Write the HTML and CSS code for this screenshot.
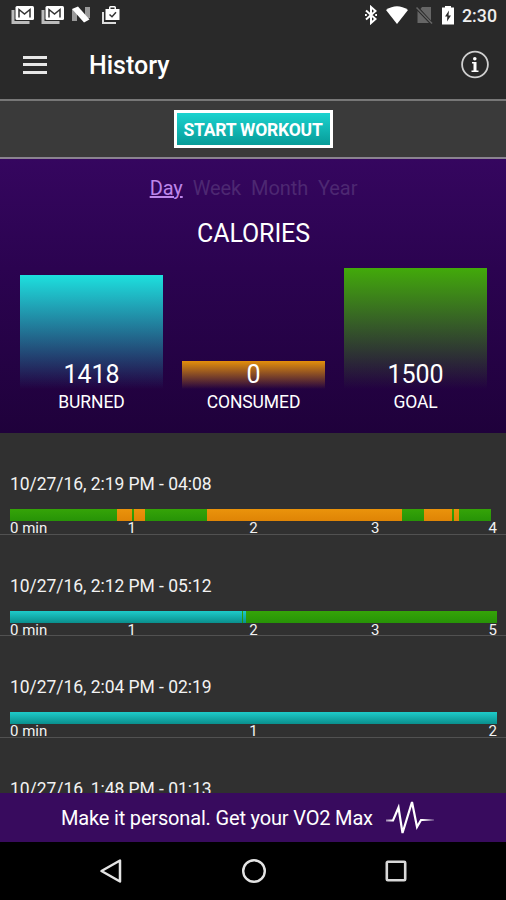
FILE: index.html
```html
<!DOCTYPE html>
<html lang="en">
<head>
    <meta charset="UTF-8">
    <meta name="viewport" content="width=device-width, initial-scale=1.0">
    <title>History</title>
    <link rel="stylesheet" href="styles.css">
</head>
<body>
    <div class="status-bar">
        <div class="status-left">
            <svg class="mail-icon" width="24" height="20" viewBox="0 0 24 20">
                <path d="M2 5v12.500h16.500" fill="none" stroke="#bbb" stroke-width="3"/>
                <rect x="4.500" y="1" width="18.500" height="14" rx="1.500" fill="#fff"/>
                <path d="M8 12.500V4.500l5.500 4.500L19 4.500v8" fill="none" stroke="#333" stroke-width="1.500"/>
            </svg>
            <svg class="mail-icon" width="24" height="20" viewBox="0 0 24 20">
                <path d="M2 5v12.500h16.500" fill="none" stroke="#bbb" stroke-width="3"/>
                <rect x="4.500" y="1" width="18.500" height="14" rx="1.500" fill="#fff"/>
                <path d="M8 12.500V4.500l5.500 4.500L19 4.500v8" fill="none" stroke="#333" stroke-width="1.500"/>
            </svg>
            <svg class="n-icon" width="20" height="18" viewBox="0 0 20 18">
                <path d="M1 3v12h5V5zM14 1v12l5-1V1z" fill="#999"/>
                <path d="M1 3l6-2.500 11.500 13L13 16.500z" fill="#fff"/>
            </svg>
            <svg width="20" height="20" viewBox="0 0 20 20">
                <path d="M2 7v11h13" fill="none" stroke="#ddd" stroke-width="2"/>
                <path d="M8 4V2.500Q8 1 9.500 1h4Q15 1 15 2.500V4h3.500v11H4.500V4zM9.500 4h4V2.500h-4z" fill="#fff" fill-rule="evenodd"/>
                <path d="M8.500 9.500l2.500 2.300 4-4.500" fill="none" stroke="#333" stroke-width="1.500"/>
            </svg>
        </div>
        <div class="status-right">
            <svg width="14" height="20" viewBox="0 0 14 20">
                <path d="M2 5.500l9.500 8.500L7 18V2l4.500 4L2 14.500" fill="none" stroke="#fff" stroke-width="2"/>
                <path d="M1 10h1.800M11.200 10H13" stroke="#fff" stroke-width="2"/>
            </svg>
            <svg class="wifi-icon" width="24" height="18" viewBox="0 0 24 18">
                <path d="M1 4Q12-3.500 23 4L12 18z" fill="#fff"/>
            </svg>
            <svg class="sim-icon" width="17" height="18" viewBox="0 0 17 18">
                <path d="M6 1h9v13.500L4.500 3zM1.500 5L13 17H1.500z" fill="#666"/>
                <path d="M.5 1.500l15.500 16" stroke="#666" stroke-width="1.500"/>
            </svg>
            <svg class="battery-icon" width="14" height="20" viewBox="0 0 14 20">
                <path d="M4 2.500V1h6v1.500h3v17H1v-17z" fill="#fff"/>
                <path d="M8 5.500L4 11.500h2.300L6 16.500l4-6H7.500z" fill="#2a2a2a"/>
            </svg>
            <span class="clock">2:30</span>
        </div>
    </div>

    <header class="header">
        <div class="menu-button">
            <span></span>
            <span></span>
            <span></span>
        </div>
        <h1>History</h1>
        <svg class="info-icon" width="30" height="30" viewBox="0 0 30 30">
            <circle cx="15" cy="14.500" r="12.900" fill="none" stroke="#d0d0d0" stroke-width="1.800"/>
            <circle cx="14.800" cy="8.700" r="1.800" fill="#fff"/>
            <path d="M12 12h4.500v8.500H18.500V22h-7v-1.500h2v-7H12z" fill="#fff"/>
        </svg>
    </header>

    <div class="workout-bar">
        <button class="workout-button">START WORKOUT</button>
    </div>

    <section class="calories">
        <nav class="tabs">
            <a class="active">Day</a>
            <a>Week</a>
            <a>Month</a>
            <a>Year</a>
        </nav>
        <h2>CALORIES</h2>
        <div class="chart">
            <div class="column">
                <div class="bar burned"><span>1418</span></div>
                <p>BURNED</p>
            </div>
            <div class="column">
                <div class="bar consumed"><span>0</span></div>
                <p>CONSUMED</p>
            </div>
            <div class="column">
                <div class="bar goal"><span>1500</span></div>
                <p>GOAL</p>
            </div>
        </div>
    </section>

    <main class="list">
        <div class="workout">
            <h3>10/27/16, 2:19 PM - 04:08</h3>
            <div class="timeline">
                <i class="green" style="width: 107px"></i>
                <i class="orange" style="width: 15px"></i>
                <i class="green" style="width: 2px"></i>
                <i class="orange" style="width: 10.500px"></i>
                <i class="green" style="width: 62.500px"></i>
                <i class="orange" style="width: 195px"></i>
                <i class="green" style="width: 22px"></i>
                <i class="orange" style="width: 28px"></i>
                <i class="green" style="width: 2px"></i>
                <i class="orange" style="width: 5px"></i>
                <i class="green" style="width: 32px"></i>
            </div>
            <div class="scale quarters">
                <span>0 min</span><span>1</span><span>2</span><span>3</span><span>4</span>
            </div>
        </div>
        <div class="workout">
            <h3>10/27/16, 2:12 PM - 05:12</h3>
            <div class="timeline">
                <i class="teal" style="width: 232px"></i>
                <i class="green" style="width: 1px"></i>
                <i class="teal" style="width: 3px"></i>
                <i class="green" style="width: 251px"></i>
            </div>
            <div class="scale quarters">
                <span>0 min</span><span>1</span><span>2</span><span>3</span><span>5</span>
            </div>
        </div>
        <div class="workout">
            <h3>10/27/16, 2:04 PM - 02:19</h3>
            <div class="timeline">
                <i class="teal" style="width: 487px"></i>
            </div>
            <div class="scale halves">
                <span>0 min</span><span>1</span><span>2</span>
            </div>
        </div>
        <div class="workout">
            <h3>10/27/16, 1:48 PM - 01:13</h3>
        </div>
    </main>

    <div class="banner">
        <span>Make it personal. Get your VO2 Max</span>
        <svg width="50" height="38" viewBox="0 0 50 38">
            <defs>
                <linearGradient id="fade" gradientUnits="userSpaceOnUse" x1="0" y1="0" x2="50" y2="0">
                    <stop offset="0" stop-color="#fff" stop-opacity=".4"/>
                    <stop offset=".15" stop-color="#fff"/>
                    <stop offset=".75" stop-color="#fff"/>
                    <stop offset="1" stop-color="#fff" stop-opacity=".1"/>
                </linearGradient>
            </defs>
            <path d="M1 21.500h7L13.500 8.500l4 25.500L27 3l5 25 4-7H49" fill="none" stroke="url(#fade)" stroke-width="2.200"/>
        </svg>
    </div>

    <div class="nav-bar">
        <svg width="24" height="26" viewBox="0 0 24 26">
            <path d="M21 2.500v21L2.500 13z" fill="none" stroke="#e4e4e4" stroke-width="2.500" stroke-linejoin="round"/>
        </svg>
        <svg width="26" height="26" viewBox="0 0 26 26">
            <circle cx="13" cy="13" r="10.800" fill="none" stroke="#e4e4e4" stroke-width="2.400"/>
        </svg>
        <svg width="24" height="26" viewBox="0 0 24 26">
            <rect x="2.800" y="3.800" width="18.400" height="18.400" rx="1" fill="none" stroke="#d8d8d8" stroke-width="2.600"/>
        </svg>
    </div>
</body>
</html>
```

FILE: styles.css
```css
* {
    box-sizing: border-box;
}
body {
    margin: 0;
    height: 900px;
    display: flex;
    flex-direction: column;
    overflow: hidden;
    background-color: #303030;
    color: #fff;
    font-family: Roboto, sans-serif;
}
h1, h2, h3, p {
    margin: 0;
    font-weight: 400;
}
svg {
    display: block;
    flex: none;
}

/* status bar */
.status-bar {
    height: 30px;
    flex: none;
    display: flex;
    justify-content: space-between;
    padding: 0 9px 0 11px;
    background-color: #292929;
}
.status-left,
.status-right {
    display: flex;
    align-items: center;
}
.mail-icon {
    margin-right: 6px;
}
.n-icon {
    margin-right: 10px;
}
.wifi-icon {
    margin-left: 7px;
}
.sim-icon {
    margin-left: 7px;
}
.battery-icon {
    margin: 0 7px 0 8px;
}
.clock {
    font-size: 17.800px;
    font-weight: 500;
    color: #eee;
    padding-top: 1px;
}

/* header */
.header {
    height: 69px;
    flex: none;
    display: flex;
    align-items: center;
    padding: 0 16px 0 23px;
    background-color: #292929;
}
.menu-button {
    width: 24px;
    height: 18px;
    display: flex;
    flex-direction: column;
    justify-content: space-between;
}
.menu-button span {
    height: 3px;
    background-color: #e6e6e6;
}
.header h1 {
    flex: 1;
    margin-left: 42px;
    padding-top: 2px;
    font-size: 25px;
    font-weight: 500;
}

/* start workout */
.workout-bar {
    height: 60px;
    flex: none;
    display: flex;
    align-items: center;
    justify-content: center;
    background-color: #3a3a3a;
    border-top: 2px solid #777;
    border-bottom: 2px solid #8a8390;
}
.workout-button {
    width: 159px;
    height: 38px;
    padding: 1px 0 0;
    border: 3px solid #fff;
    background: linear-gradient(#1bd3cf, #079b98);
    color: #fff;
    font-family: inherit;
    font-size: 17.500px;
    font-weight: 700;
    letter-spacing: -0.2px;
    white-space: nowrap;
}

/* calories */
.calories {
    height: 274px;
    flex: none;
    background: linear-gradient(#35065f, #2b0350 40%, #1f013b);
    text-align: center;
}
.tabs {
    display: flex;
    justify-content: center;
    gap: 10px;
    padding: 17px 0 0 1px;
    font-size: 20px;
    line-height: 24px;
    letter-spacing: -0.1px;
    color: #4d2872;
}
.tabs .active {
    color: #bd86ea;
    text-decoration: underline;
}
.calories h2 {
    margin-top: 19px;
    padding-left: 1px;
    font-size: 25px;
    line-height: 30px;
    letter-spacing: -0.1px;
}
.chart {
    display: flex;
    gap: 19px;
    height: 164px;
    padding: 0 19px 0 20px;
}
.column {
    flex: 1;
    display: flex;
    flex-direction: column;
    justify-content: flex-end;
}
.bar {
    display: flex;
    align-items: flex-end;
    justify-content: center;
    font-size: 25px;
    line-height: 28px;
}
.burned {
    height: 114px;
    background: linear-gradient(#1de0de, rgba(29, 224, 222, 0));
}
.consumed {
    height: 28px;
    background: linear-gradient(#e38f0b, rgba(227, 143, 11, 0));
}
.goal {
    height: 121px;
    background: linear-gradient(#42aa0a, rgba(66, 170, 10, 0));
}
.column p {
    height: 24px;
    padding-top: 3px;
    font-size: 17.500px;
    line-height: 20px;
    letter-spacing: -0.1px;
}

/* workout list */
.list {
    height: 360px;
    flex: none;
    overflow: hidden;
    background-color: #303030;
}
.workout {
    height: 101.700px;
    padding: 40px 9px 0 10px;
    border-bottom: 1px solid #515151;
}
.workout h3 {
    font-size: 17.500px;
    line-height: 22px;
    letter-spacing: -0.05px;
    color: #f2f2f2;
}
.timeline {
    display: flex;
    height: 12px;
    margin-top: 14px;
}
.green {
    background: linear-gradient(#35a408, #279307);
}
.orange {
    background: linear-gradient(#ea930b, #df8405);
}
.teal {
    background: linear-gradient(#1ecbc9, #0a8f8d);
}
.scale {
    display: grid;
    font-size: 15px;
    line-height: 15px;
    color: #f2f2f2;
    text-align: center;
}
.quarters {
    grid-template-columns: 1fr 2fr 2fr 2fr 1fr;
}
.halves {
    grid-template-columns: 1fr 2fr 1fr;
}
.scale span:first-child {
    text-align: left;
}
.scale span:last-child {
    text-align: right;
}

/* banner */
.banner {
    height: 49px;
    flex: none;
    display: flex;
    align-items: center;
    padding-left: 61px;
    gap: 12px;
    background-color: #380b5e;
    font-size: 20px;
    letter-spacing: -0.17px;
}

/* navigation buttons */
.nav-bar {
    flex: 1;
    display: flex;
    align-items: center;
    justify-content: center;
    gap: 117.500px;
    padding-left: 1px;
    background-color: #000;
}
```
